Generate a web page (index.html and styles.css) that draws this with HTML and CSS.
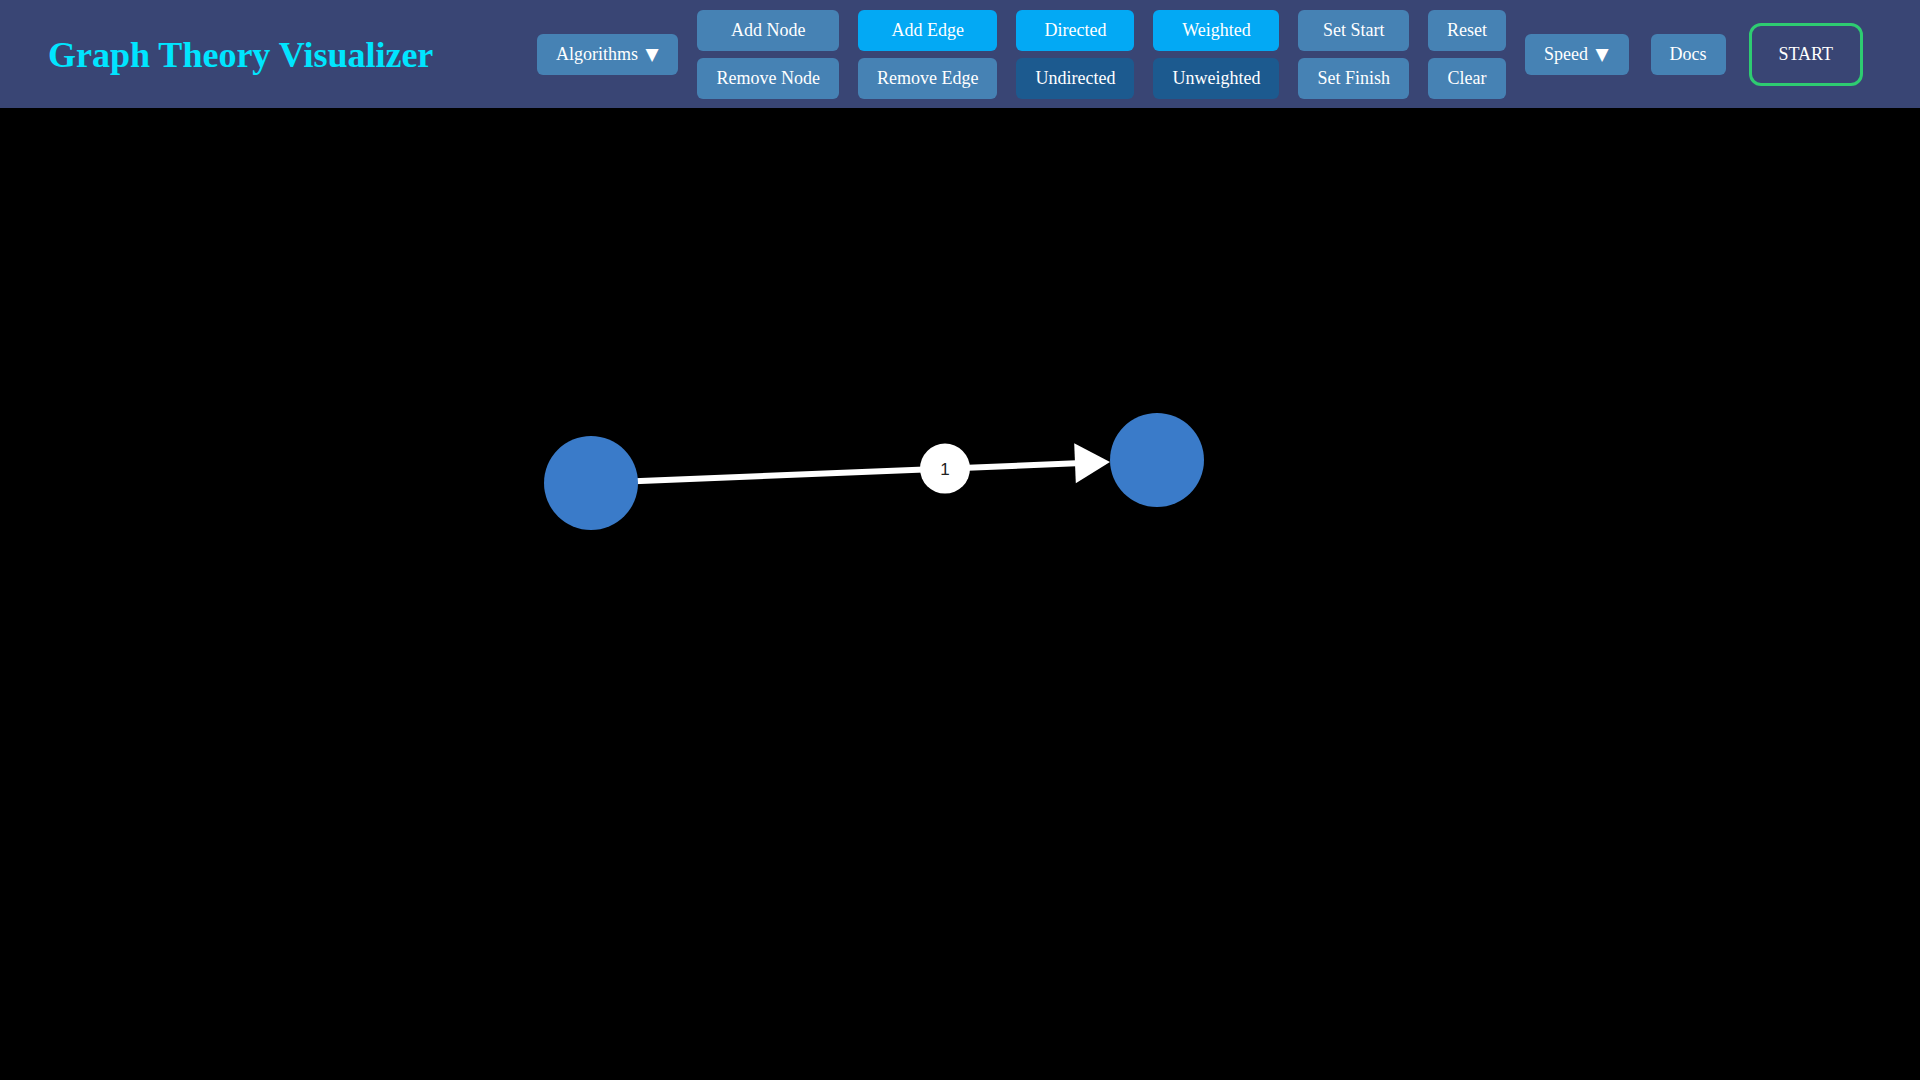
FILE: index.html
```html
<!DOCTYPE html>
<html lang="en">
<head>
<meta charset="utf-8">
<title>Graph Theory Visualizer</title>
<link rel="stylesheet" href="styles.css">
</head>
<body>
<header class="topbar">
  <h1 class="title">Graph Theory Visualizer</h1>
  <nav class="nav">
    <button class="btn">Algorithms <span class="caret">▼</span></button>
    <div class="col">
      <button class="btn">Add Node</button>
      <button class="btn">Remove Node</button>
    </div>
    <div class="col">
      <button class="btn btn-active">Add Edge</button>
      <button class="btn">Remove Edge</button>
    </div>
    <div class="col">
      <button class="btn btn-active">Directed</button>
      <button class="btn btn-dark">Undirected</button>
    </div>
    <div class="col">
      <button class="btn btn-active">Weighted</button>
      <button class="btn btn-dark">Unweighted</button>
    </div>
    <div class="col">
      <button class="btn">Set Start</button>
      <button class="btn">Set Finish</button>
    </div>
    <div class="col">
      <button class="btn">Reset</button>
      <button class="btn">Clear</button>
    </div>
    <button class="btn">Speed <span class="caret">▼</span></button>
    <button class="btn btn-docs">Docs</button>
    <button class="btn-start">START</button>
  </nav>
</header>
<main class="canvas">
  <svg class="graph" width="1920" height="972" viewBox="0 0 1920 972">
    <line x1="591" y1="375" x2="1076" y2="355.3" class="edge"/>
    <polygon points="1110,353.9 1075.8,375.3 1074.2,335.3" class="arrow"/>
    <circle cx="945" cy="360.6" r="25" class="weight"/>
    <text x="945" y="366.5" class="weight-text">1</text>
    <circle cx="591" cy="375" r="47" class="node"/>
    <circle cx="1157" cy="352" r="47" class="node"/>
  </svg>
</main>
</body>
</html>
```
FILE: styles.css
```css
html, body {
  margin: 0;
  padding: 0;
  background: #000;
  overflow: hidden;
}

body {
  font-family: "Liberation Serif", "Times New Roman", serif;
}

.topbar {
  height: 108px;
  box-sizing: border-box;
  background: #394574;
  display: flex;
  align-items: center;
  justify-content: space-between;
  padding: 0 57px 0 48px;
}

.title {
  margin: 0;
  font-size: 36px;
  font-weight: bold;
  color: #00e5ff;
  padding-top: 2px;
}

.nav {
  display: flex;
  align-items: center;
  gap: 19px;
}

.col {
  display: flex;
  flex-direction: column;
  gap: 7px;
}

.btn {
  font-family: "Liberation Serif", "Times New Roman", serif;
  font-size: 18px;
  line-height: normal;
  color: #fff;
  background: #4682b4;
  border: none;
  border-radius: 6px;
  padding: 10px 19px;
  margin: 0;
  white-space: nowrap;
}

.btn-active {
  background: #03a9f4;
}

.btn-dark {
  background: #1c5a8f;
}

.btn-docs {
  margin-left: 3px;
}

.caret {
  font-family: "DejaVu Sans", sans-serif;
  font-size: 17px;
  margin-left: 3px;
  margin-right: 1px;
}

.btn-start {
  font-family: "Liberation Serif", "Times New Roman", serif;
  font-size: 18px;
  line-height: normal;
  color: #fff;
  background: transparent;
  border: 3px solid #2ecc71;
  border-radius: 12px;
  padding: 18px 27px;
  margin: 0 0 0 4px;
}

.canvas {
  height: calc(100vh - 108px);
  background: #000;
}

.graph {
  display: block;
}

.edge {
  stroke: #fff;
  stroke-width: 6;
}

.arrow {
  fill: #fff;
}

.weight {
  fill: #fff;
}

.weight-text {
  font-family: "Liberation Sans", Arial, sans-serif;
  font-size: 17px;
  fill: #222;
  text-anchor: middle;
}

.node {
  fill: #3a7bc9;
}
```
